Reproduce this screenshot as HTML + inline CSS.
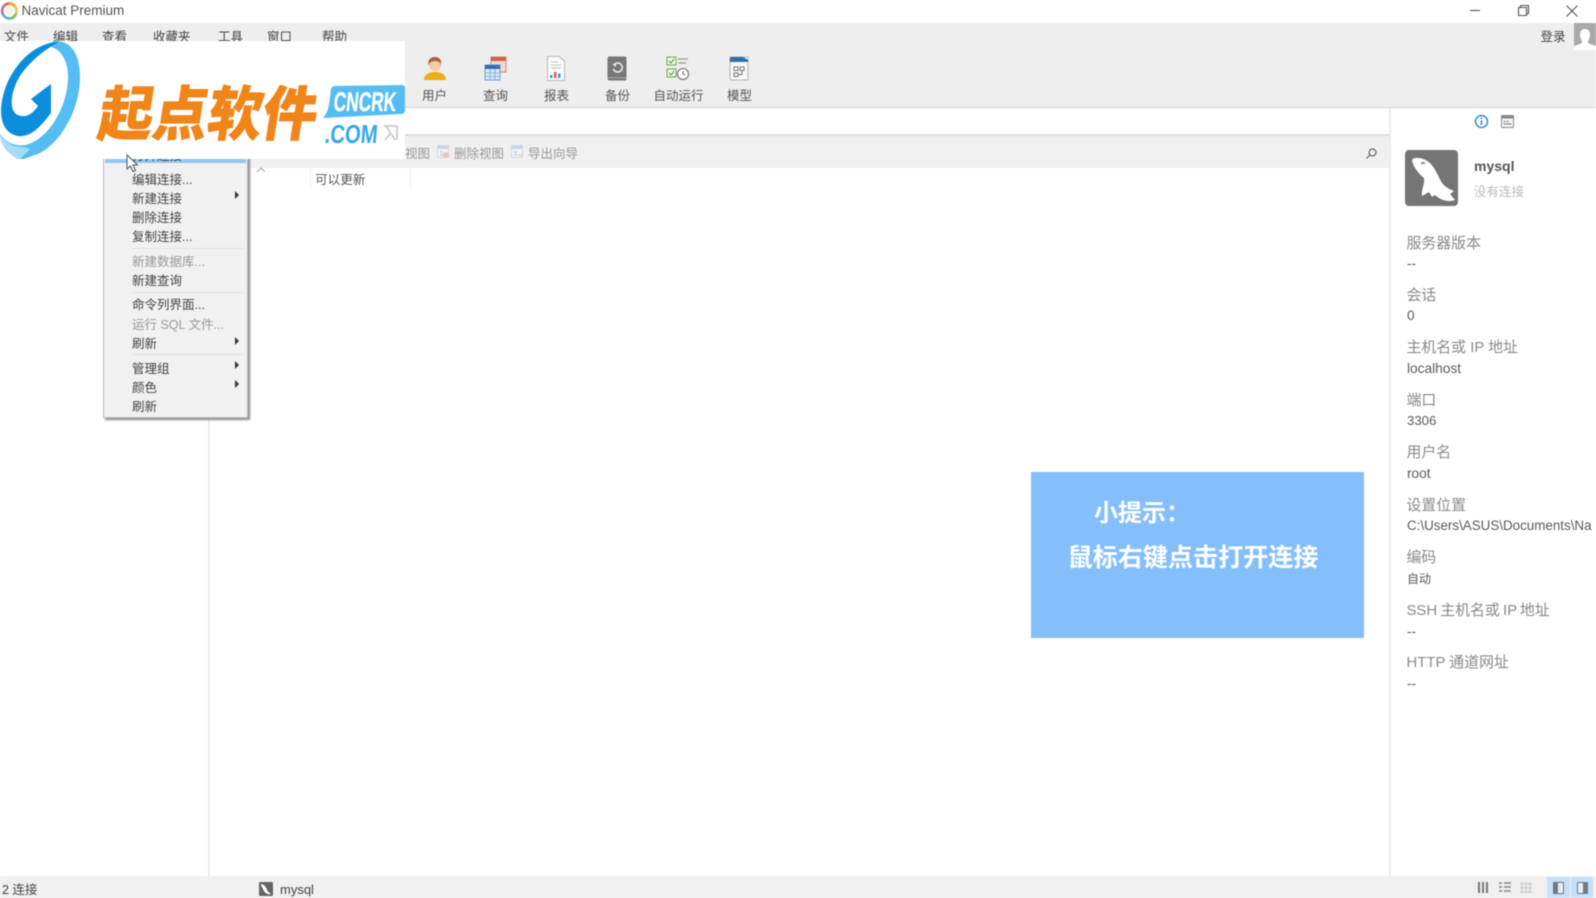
<!DOCTYPE html>
<html lang="zh">
<head>
<meta charset="utf-8">
<title>Navicat Premium</title>
<style>
html,body{margin:0;padding:0;background:#fff}
body{width:1596px;height:898px;overflow:hidden;position:relative;font-family:"Liberation Sans","Noto Sans CJK SC",sans-serif;color:#444}
#r{position:absolute;left:0;top:0;width:1596px;height:898px;overflow:hidden;filter:blur(.5px)}
.a{position:absolute}
.t{position:absolute;white-space:nowrap;line-height:18px;font-size:13px;transform:translateY(-8px)}
.m{color:#444;font-size:12.5px}
.tb{color:#555;font-size:12.5px;transform:translate(-50%,-8px)}
.mi{color:#444;font-size:12.5px}
.dis{color:#999}
.sep{position:absolute;left:132px;width:112px;height:1px;background:#e2e2e2}
.ar{position:absolute;left:235px;width:0;height:0;border-left:4px solid #333;border-top:4px solid transparent;border-bottom:4px solid transparent}
.l{color:#8a8a8a;font-size:14.9px}
.v{color:#5a5a5a;font-size:13.7px}
</style>
</head>
<body>
<div id="r">
<!-- title bar -->
<svg class="a" style="left:0;top:1px" width="19" height="20" viewBox="0 0 19 20" fill="none" stroke-width="2.800"><path d="M4 5a7.500 7.500 0 0 1 5-2.500" stroke="#d9694a"/><path d="M9 2.500a7.500 7.500 0 0 1 6 3" stroke="#e8a03a"/><path d="M15 5.500a7.500 7.500 0 0 1 1 7" stroke="#e8c84a"/><path d="M16 12.500a7.500 7.500 0 0 1-6 5" stroke="#7cc06a"/><path d="M10 17.500a7.500 7.500 0 0 1-7-4" stroke="#58b0c8"/><path d="M3 13.500a7.500 7.500 0 0 1 1-8.500" stroke="#b070b8"/><circle cx="9.500" cy="10" r="4" fill="#f6efe6" stroke="none"/></svg>
<div class="t" style="left:21.500px;top:10px;font-size:13.500px;color:#555">Navicat Premium</div>
<svg class="a" style="left:1460px;top:0" width="136" height="23" viewBox="0 0 136 23" fill="none" stroke="#555" stroke-width="1.100"><path d="M10 10.500H20"/><path d="M58.500 7.500h8v8h-8zM60.500 7.500v-2h8v8h-2"/><path d="M106.500 5.500l11 11M117.500 5.500l-11 11"/></svg>
<!-- toolbar area -->
<div class="a" style="left:0;top:23px;width:1596px;height:84px;background:#eeeeee"></div>
<div class="a" style="left:0;top:107px;width:1596px;height:1px;background:#d4d4d4"></div>
<div class="t m" style="left:4px;top:36px">文件</div>
<div class="t m" style="left:53px;top:36px">编辑</div>
<div class="t m" style="left:102px;top:36px">查看</div>
<div class="t m" style="left:153px;top:36px">收藏夹</div>
<div class="t m" style="left:218px;top:36px">工具</div>
<div class="t m" style="left:267px;top:36px">窗口</div>
<div class="t m" style="left:322px;top:36px">帮助</div>
<div class="t" style="left:1540.500px;top:36px;font-size:12.500px;color:#444">登录</div>
<svg class="a" style="left:1574px;top:23px" width="22" height="27" viewBox="0 0 22 27"><rect width="22" height="27" fill="#a9a9a9"/><path d="M11 6c3.500 0 5 2.500 5 6s-1.500 5-2 6v2c2 1 5 2 8 3v4H0v-4c3-1 6-2 8-3v-2c-.5-1-2-2.500-2-6s1.500-6 5-6z" fill="#fff"/></svg>
<!-- toolbar icons -->
<svg class="a" style="left:424px;top:55px" width="22" height="26" viewBox="0 0 22 26"><path d="M0 25c0-6 5-7 8-8h6c3 1 8 2 8 8z" fill="#f0ad14"/><circle cx="11" cy="10" r="6" fill="#f3c9a8"/><path d="M4.500 10c-1-6 3-8 6.500-8s7 2 6 8c-1-3-3-4-6-4s-5 1-6.500 4z" fill="#a9623a"/></svg>
<svg class="a" style="left:484px;top:56px" width="23" height="25" viewBox="0 0 23 25"><rect x="7" y="1" width="15" height="15" fill="#f3d7d0" stroke="#d8826f"/><rect x="7" y="1" width="15" height="4" fill="#d0604a"/><rect x="1" y="9" width="15" height="15" fill="#dbe8f6" stroke="#6f9fd0"/><rect x="1" y="9" width="15" height="4" fill="#2f6fb3"/><path d="M1 17h15M1 20.500h15M6 13v11M11 13v11" stroke="#7aa6d4" stroke-width=".8"/></svg>
<svg class="a" style="left:546px;top:56px" width="20" height="25" viewBox="0 0 20 25"><path d="M1.500.5h12l5 5v19h-17z" fill="#fbfbfb" stroke="#b8b8b8"/><path d="M5 6h7M5 9h10M5 12h10" stroke="#c4c4c4"/><rect x="4" y="19" width="2.500" height="3" fill="#4a90d9"/><rect x="8" y="16" width="2.500" height="6" fill="#d9604a"/><rect x="12" y="17.500" width="2.500" height="4.500" fill="#4a90d9"/></svg>
<svg class="a" style="left:607px;top:56px" width="20" height="25" viewBox="0 0 20 25"><rect x=".5" y=".5" width="19" height="24" rx="2" fill="#777"/><rect x=".5" y="21" width="19" height="1.500" fill="#9a9a9a"/><path d="M7 9a4.500 4.500 0 1 1-.5 4" fill="none" stroke="#eee" stroke-width="1.500"/><path d="M5 8h4v3z" fill="#eee"/></svg>
<svg class="a" style="left:666px;top:56px" width="24" height="25" viewBox="0 0 24 25" fill="none"><rect x="1" y="1" width="9" height="8" fill="#eef6e6" stroke="#6aa84f"/><path d="M3 5l2 2 3-4" stroke="#4b8f30"/><rect x="1" y="13" width="9" height="8" fill="#eef6e6" stroke="#6aa84f"/><path d="M3 17l2 2 3-4" stroke="#4b8f30"/><path d="M12 3h10M12 7h8M12 15h3" stroke="#9a9a9a" stroke-width="1.200"/><circle cx="17" cy="18" r="5.500" fill="#fff" stroke="#666"/><path d="M17 15v3l2 1" stroke="#666"/></svg>
<svg class="a" style="left:729px;top:56px" width="20" height="25" viewBox="0 0 20 25"><rect x="1" y="1" width="18" height="23" rx="1" fill="#f8f8f8" stroke="#b4b4b4"/><path d="M1 6V2q0-1 1-1h12l5 3v2z" fill="#2f6fa8"/><rect x="5" y="11" width="4" height="3.500" fill="none" stroke="#777"/><rect x="11" y="11" width="4" height="3.500" fill="none" stroke="#777"/><rect x="5" y="17" width="4" height="3.500" fill="none" stroke="#777"/><path d="M13 14.500v4h-4" fill="none" stroke="#777"/></svg>
<div class="t tb" style="left:434.500px;top:94.500px">用户</div>
<div class="t tb" style="left:495.500px;top:94.500px">查询</div>
<div class="t tb" style="left:556.500px;top:94.500px">报表</div>
<div class="t tb" style="left:617.500px;top:94.500px">备份</div>
<div class="t tb" style="left:678.500px;top:94.500px">自动运行</div>
<div class="t tb" style="left:739.500px;top:94.500px">模型</div>
<!-- sub toolbar -->
<div class="a" style="left:208px;top:134px;width:1182px;height:2px;background:#dcdcdc"></div>
<div class="a" style="left:208px;top:136px;width:1182px;height:32px;background:#f0f0f0"></div>
<div class="t" style="left:405px;top:152.500px;color:#999;font-size:12.500px">视图</div>
<svg class="a" style="left:437px;top:145px" width="13" height="14" viewBox="0 0 13 14"><rect x=".5" y=".5" width="11" height="12" fill="#f2f4f8" stroke="#cfd7e2"/><rect x="1" y="1" width="10" height="3" fill="#c9d5e3"/><circle cx="9" cy="10" r="3" fill="#edc4be"/><path d="M3 6h3v2H3zM3 9h3v2H3z" fill="#d0d6de"/></svg>
<div class="t" style="left:454px;top:152.500px;color:#999;font-size:12.500px">删除视图</div>
<svg class="a" style="left:511px;top:145px" width="13" height="14" viewBox="0 0 13 14"><rect x=".5" y=".5" width="11" height="12" fill="#f2f4f8" stroke="#cfd7e2"/><rect x="1" y="1" width="10" height="3" fill="#c9d5e3"/><path d="M3 6h3v2H3zM3 9h3v2H3z" fill="#d0d6de"/><path d="M7 10h5" stroke="#ead9b4" stroke-width="2"/></svg>
<div class="t" style="left:528px;top:152.500px;color:#999;font-size:12.500px">导出向导</div>
<svg class="a" style="left:1365px;top:147px" width="13" height="14" viewBox="0 0 13 14" fill="none" stroke="#666" stroke-width="1.200"><circle cx="7.500" cy="5.500" r="3.500"/><path d="M5 8l-3.500 3.500"/></svg>
<!-- panel borders -->
<div class="a" style="left:208px;top:108px;width:2px;height:768px;background:#ececec"></div>
<div class="a" style="left:1389px;top:108px;width:2px;height:768px;background:#ececec"></div>
<!-- list header -->
<svg class="a" style="left:256px;top:167px" width="10" height="6" viewBox="0 0 10 6"><path d="M1 5l4-4 4 4" fill="none" stroke="#aaa"/></svg>
<div class="a" style="left:310px;top:168px;width:1px;height:22px;background:#f0f0f0"></div>
<div class="a" style="left:410px;top:168px;width:1px;height:22px;background:#f0f0f0"></div>
<div class="t" style="left:315px;top:179px;font-size:12.600px;color:#555">可以更新</div>
<!-- context menu -->
<div class="a" style="left:103px;top:150px;width:145px;height:268px;background:#f1f1f1;border:1px solid #bcbcbc;box-sizing:border-box;box-shadow:2px 2px 2px #8a8a8a"></div>
<div class="a" style="left:105px;top:150px;width:141px;height:13px;background:#93c6f3"></div>
<div class="t mi" style="left:132px;top:155px">打开连接</div>
<div class="t mi" style="left:132px;top:179px">编辑连接...</div>
<div class="t mi" style="left:132px;top:198px">新建连接</div>
<div class="t mi" style="left:132px;top:217px">删除连接</div>
<div class="t mi" style="left:132px;top:236px">复制连接...</div>
<div class="sep" style="top:248px"></div>
<div class="t mi dis" style="left:132px;top:260.500px">新建数据库...</div>
<div class="t mi" style="left:132px;top:279.500px">新建查询</div>
<div class="sep" style="top:292px"></div>
<div class="t mi" style="left:132px;top:304px">命令列界面...</div>
<div class="t mi dis" style="left:132px;top:323.500px">运行 SQL 文件...</div>
<div class="t mi" style="left:132px;top:342.500px">刷新</div>
<div class="sep" style="top:354px"></div>
<div class="t mi" style="left:132px;top:367.500px">管理组</div>
<div class="t mi" style="left:132px;top:386.500px">颜色</div>
<div class="t mi" style="left:132px;top:405.500px">刷新</div>
<div class="ar" style="top:191px"></div>
<div class="ar" style="top:337px"></div>
<div class="ar" style="top:361px"></div>
<div class="ar" style="top:380px"></div>
<!-- logo overlay -->
<div class="a" style="left:0;top:41px;width:405px;height:118px;background:#fff;overflow:hidden">
<svg class="a" style="left:0;top:0" width="90" height="118" viewBox="0 0 90 118">
<path d="M55 0C72 0 80 14 80 36C80 68 62 100 40 112L24 118H18C6 112 0 102 0 92C4 100 14 106 26 104C52 96 68 62 68 36C68 18 60 6 44 4Z" fill="#55bdf2"/>
<path d="M0 92C4 100 12 106 22 106L30 108L20 118H18C6 112 0 102 0 92Z" fill="#a6dcf8"/>
<path d="M59 1C36 1 14 22 5 48C-3 72 1 92 18 95C34 97 46 78 51 72V72L51 43L31 58L38 65C32 74 24 78 16 73C8 66 12 46 22 32C32 19 44 9 59 1Z" fill="#0b8fdc"/>
</svg>
<div class="a" style="left:94px;top:37px;font-family:'Noto Sans CJK SC',sans-serif;font-weight:900;font-size:54px;line-height:70px;letter-spacing:0;color:#f0851a;white-space:nowrap;transform:skewX(-9deg) scale(1.01,1.09);transform-origin:left bottom;-webkit-text-stroke:.6px #f0851a">起点软件</div>
<svg class="a" style="left:322px;top:44px" width="84" height="36" viewBox="0 0 84 36"><path d="M9 4Q10 1 13 1L80 0Q83 0 83 3V25Q83 29 79 29L1 33Q6 27 7 20Z" fill="#55bdf2"/></svg>
<div class="a" style="left:335px;top:48px;font-size:27px;font-weight:700;line-height:26px;color:#fff;transform:scaleX(.64) skewX(-8deg);transform-origin:left top;white-space:nowrap;-webkit-text-stroke:.3px #fff">CNCRK</div>
<div class="a" style="left:326px;top:79px;font-size:26px;font-weight:700;line-height:28px;color:#35a9ea;transform:scaleX(.78) skewX(-6deg);transform-origin:left top;white-space:nowrap">.COM</div>
<svg class="a" style="left:383px;top:84px" width="15" height="16" viewBox="0 0 15 16" fill="none" stroke="#cfcfcf" stroke-width="2"><path d="M1 1h13v14M3 1l9 14M2 15l5-6"/></svg>
</div>
<!-- cursor -->
<svg class="a" style="left:126px;top:154px" width="13" height="19" viewBox="0 0 13 19"><path d="M1 1v14l3.500-3 2.500 5.500 2.500-1-2.500-5.500h4.500z" fill="#fff" stroke="#555"/></svg>
<!-- right panel -->
<svg class="a" style="left:1474px;top:114px" width="15" height="15" viewBox="0 0 15 15"><circle cx="7.500" cy="7.500" r="6" fill="#fff" stroke="#3b8fe0" stroke-width="1.600"/><path d="M7.500 6.500v4.500" stroke="#3b8fe0" stroke-width="1.800"/><circle cx="7.500" cy="4.300" r="1" fill="#3b8fe0"/></svg>
<svg class="a" style="left:1501px;top:115px" width="13" height="13" viewBox="0 0 13 13"><rect x=".5" y=".5" width="12" height="12" rx="1" fill="#f4f4f4" stroke="#888"/><rect x="1" y="1" width="11" height="2.500" fill="#888"/><path d="M2.500 6.500h2M5.500 6.500h2M2.500 9h8" stroke="#777"/></svg>
<svg class="a" style="left:1405px;top:150px" width="53" height="56" viewBox="0 0 53 56"><rect width="53" height="56" rx="4" fill="#757575"/><path d="M7 10C10 6 20 8 26 14C31 20 34 28 37 33C40 37 44 39 49 41L45 44L50 50C42 53 34 49 30 45L27 47L24 42L17 46C16 40 20 34 19 28C14 24 8 17 7 10Z" fill="#fff"/><ellipse cx="18" cy="13" rx="2.200" ry="1.300" fill="#999"/></svg>
<div class="t" style="left:1474px;top:165px;font-size:14px;font-weight:700;color:#555">mysql</div>
<div class="t" style="left:1474px;top:191px;font-size:12.500px;color:#bbb">没有连接</div>
<div class="t l" style="left:1406.500px;top:242.500px">服务器版本</div>
<div class="t v" style="left:1407px;top:262.500px">--</div>
<div class="t l" style="left:1406.500px;top:294.500px">会话</div>
<div class="t v" style="left:1407px;top:315px">0</div>
<div class="t l" style="left:1406.500px;top:347px">主机名或 IP 地址</div>
<div class="t v" style="left:1407px;top:367.500px">localhost</div>
<div class="t l" style="left:1406.500px;top:400px">端口</div>
<div class="t v" style="left:1407px;top:420px;font-size:13.200px">3306</div>
<div class="t l" style="left:1406.500px;top:452px">用户名</div>
<div class="t v" style="left:1407px;top:473px">root</div>
<div class="t l" style="left:1406.500px;top:505px">设置位置</div>
<div class="t v" style="left:1407px;top:525px;font-size:13.400px">C:\Users\ASUS\Documents\Na</div>
<div class="t l" style="left:1406.500px;top:557px">编码</div>
<div class="t v" style="left:1407px;top:577.500px;font-size:12px">自动</div>
<div class="t l" style="left:1406.500px;top:609.500px;word-spacing:-1px;">SSH 主机名或 IP 地址</div>
<div class="t v" style="left:1407px;top:630.500px">--</div>
<div class="t l" style="left:1406.500px;top:662px">HTTP 通道网址</div>
<div class="t v" style="left:1407px;top:682.500px">--</div>
<!-- tip -->
<div class="a" style="left:1031px;top:472px;width:333px;height:166px;background:#84bffc"></div>
<div class="t" style="left:1094px;top:514px;font-size:24px;line-height:30px;transform:translateY(-15px);font-weight:700;color:#fff">小提示：</div>
<div class="t" style="left:1067.500px;top:557.500px;font-size:25.100px;line-height:30px;transform:translateY(-15px);font-weight:700;color:#fff">鼠标右键点击打开连接</div>
<!-- status bar -->
<div class="a" style="left:0;top:876px;width:1596px;height:22px;background:#f0f0f0"></div>
<div class="t" style="left:2px;top:888.500px;font-size:12.500px;color:#444">2 连接</div>
<svg class="a" style="left:259px;top:882px" width="14" height="14" viewBox="0 0 14 14"><rect width="14" height="14" rx="1" fill="#666"/><path d="M2 2C5 2 7 5 8 8C9 10 11 11 12 12C8 13 5 10 4 7C3 5 2 4 2 2Z" fill="#fff"/></svg>
<div class="t" style="left:280px;top:888.500px;font-size:13px;color:#444">mysql</div>
<svg class="a" style="left:1477px;top:880px" width="60" height="14" viewBox="0 0 60 14" fill="none"><g stroke="#777" stroke-width="2"><path d="M2 2v11M6 2v11M10 2v11"/></g><g stroke="#888" stroke-width="1.600"><path d="M22 3h3M22 7h3M22 11h3M27 3h7M27 7h7M27 11h7"/></g><g stroke="#ccc" stroke-width="1.200"><path d="M45 2v11M49 2v11M53 2v11M43 4h12M43 8h12M43 12h12"/></g></svg>
<div class="a" style="left:1547px;top:877px;width:46px;height:21px;background:#c5e0f8"></div>
<div class="a" style="left:1570px;top:877px;width:1px;height:21px;background:#e4f0fa"></div>
<svg class="a" style="left:1553px;top:882px" width="36" height="13" viewBox="0 0 36 13"><rect x=".5" y=".5" width="10" height="11" fill="#e8eef4" stroke="#6f7a86"/><rect x="1" y="1" width="4" height="10" fill="#6f7a86"/><rect x="24.500" y=".5" width="10" height="11" fill="#e8eef4" stroke="#6f7a86"/><rect x="30" y="1" width="4" height="10" fill="#6f7a86"/></svg>
</div>
</body>
</html>
